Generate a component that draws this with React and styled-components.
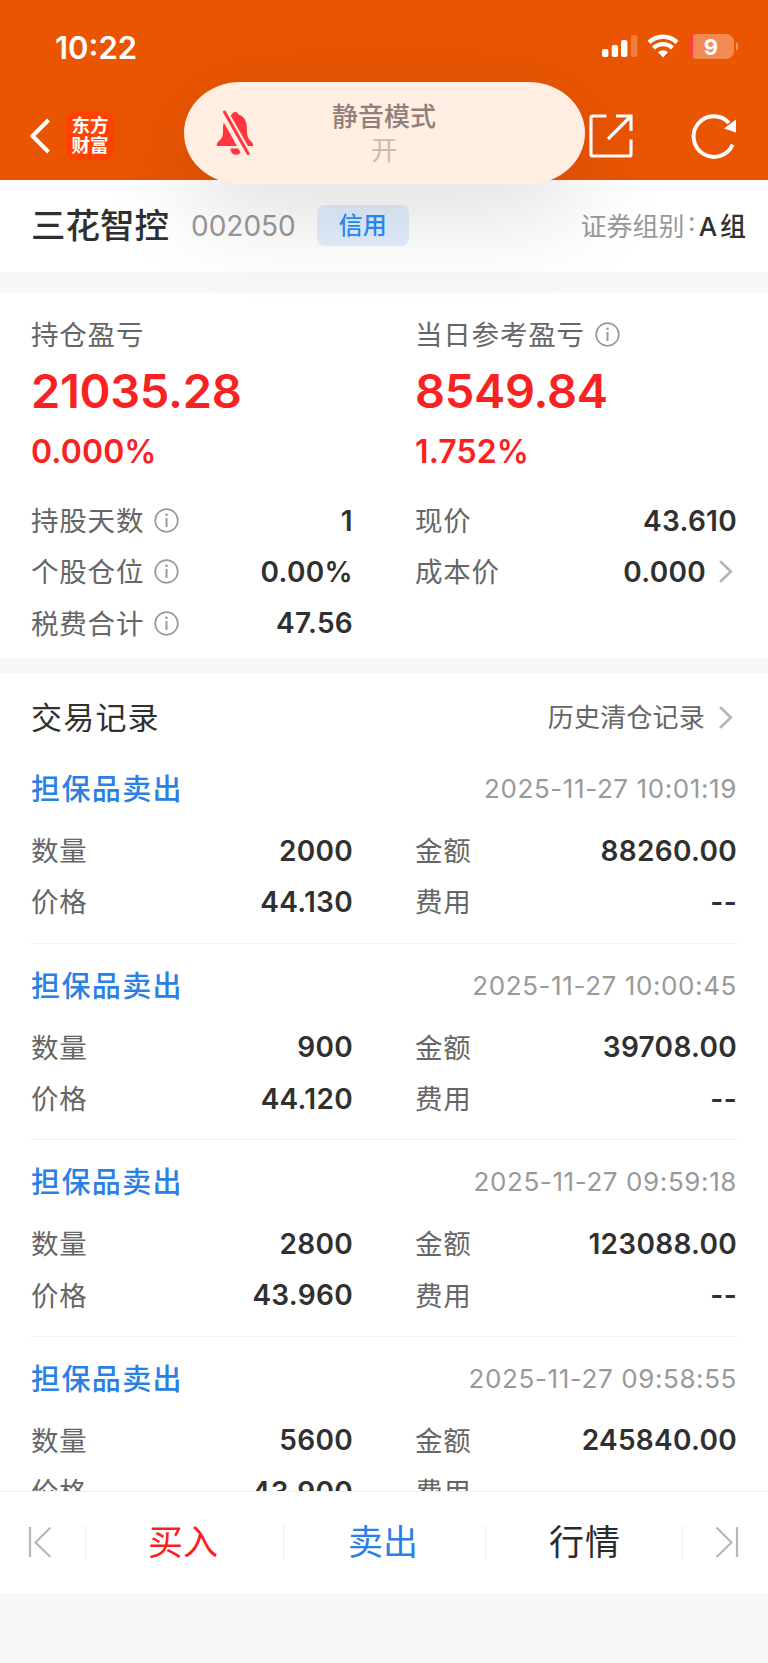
import React from "react";
import styled, { createGlobalStyle } from "styled-components";

const GlobalStyle = createGlobalStyle`
  * {
    box-sizing: border-box;
  }
  body {
    margin: 0;
    background: #f6f8fa;
    font-family: Inter, "Noto Sans CJK SC", sans-serif;
    color: #303030;
  }
`;

const summaryRows = [
  { label: "持股天数", value: "1", info: true },
  { label: "现价", value: "43.610" },
  { label: "个股仓位", value: "0.00%", info: true },
  { label: "成本价", value: "0.000", arrow: true },
  { label: "税费合计", value: "47.56", info: true },
];

const records = [
  {
    time: "2025-11-27 10:01:19",
    count: "2000",
    amount: "88260.00",
    price: "44.130",
  },
  {
    time: "2025-11-27 10:00:45",
    count: "900",
    amount: "39708.00",
    price: "44.120",
  },
  {
    time: "2025-11-27 09:59:18",
    count: "2800",
    amount: "123088.00",
    price: "43.960",
  },
  {
    time: "2025-11-27 09:58:55",
    count: "5600",
    amount: "245840.00",
    price: "43.900",
  },
];

function InfoIcon() {
  return (
    <svg width="25" height="25" viewBox="0 0 25 25" fill="none">
      <circle cx="12.5" cy="12.5" r="11.3" stroke="#999" strokeWidth="1.7" />
      <path d="M12.5 10v9" stroke="#999" strokeWidth="2" />
      <circle cx="12.5" cy="6.8" r="1.3" fill="#999" />
    </svg>
  );
}

function ChevronIcon() {
  return (
    <svg width="14" height="23" viewBox="0 0 14 23" fill="none">
      <path
        d="M1.8 1.8l10 9.7-10 9.7"
        stroke="#b5b5b5"
        strokeWidth="2.6"
        strokeLinecap="round"
      />
    </svg>
  );
}

function Field({ label, value, info, arrow }) {
  return (
    <FieldRow $arrow={arrow}>
      <Label>{label}</Label>
      {info && <InfoIcon />}
      <Value $arrow={arrow}>{value}</Value>
      {arrow && <ChevronIcon />}
    </FieldRow>
  );
}

export default function App() {
  return (
    <>
      <GlobalStyle />
      <Screen>
        <Header>
          <StatusBar>
            <Clock>10:22</Clock>
            <svg width="138" height="26" viewBox="0 0 138 26" fill="#fff">
              <rect x="0" y="15" width="6.4" height="8" rx="2" />
              <rect x="9.7" y="11" width="6.4" height="12" rx="2" />
              <rect x="19" y="6" width="6.4" height="17" rx="2" />
              <rect x="29" y="1" width="6.4" height="22" rx="2" opacity=".25" />
              <g fill="none" stroke="#fff" strokeWidth="4.4">
                <path d="M47 8.3a20.5 20.5 0 0 1 28 0" />
                <path d="M51.500 14a13.500 13.500 0 0 1 19 0" />
              </g>
              <path d="M61 23.500l-5-5.200a7.200 7.200 0 0 1 10 0z" />
              <rect x="87" y="0" width="45" height="25" rx="8" opacity=".32" />
              <path
                d="M91 .9v23.2c-2.600-1-4-3.500-4-6.600v-10c0-3.100 1.400-5.600 4-6.600z"
                fill="#ff3b45"
              />
              <path d="M134 8.500c3 .8 3 7.200 0 8z" opacity=".4" />
              <BatteryText x="109" y="20.5">
                9
              </BatteryText>
            </svg>
          </StatusBar>
          <NavBar>
            <svg width="21" height="36" viewBox="0 0 21 36" fill="none">
              <path
                d="M18.500 2L2.500 18l16 16"
                stroke="#fff"
                strokeWidth="4"
                strokeLinejoin="round"
              />
            </svg>
            <Logo>
              <span>东方</span>
              <span>财富</span>
            </Logo>
            <NavActions>
              <svg width="44" height="44" viewBox="0 0 44 44" fill="none">
                <path
                  d="M17.500 2H3.500Q2 2 2 3.500v37Q2 42 3.500 42h37q1.500 0 1.500-1.500V25.500M27 2h15v15M42 2L19 25"
                  stroke="#fff"
                  strokeWidth="3.200"
                />
              </svg>
              <svg width="46" height="46" viewBox="0 0 46 46" fill="none">
                <path
                  d="M41.600 31.500A20.300 20.300 0 1 1 38 10"
                  stroke="#fff"
                  strokeWidth="3.900"
                />
                <path d="M45 6.500v13L33 15.500z" fill="#fff" />
              </svg>
            </NavActions>
          </NavBar>
        </Header>

        <MutePill>
          <svg width="38" height="46" viewBox="0 0 38 46">
            <g fill="#ff3640">
              <path d="M7.800 12.500L21 36H1c-.8-2.500.2-3.500 2-5 3-2.500 4-5 4-9 0-4 0-7 .8-9.500z" />
              <path d="M14.500 5.200l1.500-.7C16.800 1.300 21.700 1.300 22.500 4.500c5.500 1.800 8 6.300 8.300 12 .3 7.200 0 11 4.200 15 1.800 1.500 2.300 2.500 2 4.500h-5z" />
              <path d="M14.500 38.500h7.800l2.200 4c-2.500 4-10 3-10-4z" />
            </g>
            <path
              d="M8.500 2L32 43.500"
              stroke="#ff3640"
              strokeWidth="3"
              strokeLinecap="round"
            />
          </svg>
          <PillText>
            <PillTitle>静音模式</PillTitle>
            <PillState>开</PillState>
          </PillText>
        </MutePill>

        <StockBar>
          <StockName>三花智控</StockName>
          <StockCode>002050</StockCode>
          <CreditTag>信用</CreditTag>
          <Group>
            证券组别<i>:</i>
            <b>A 组</b>
          </Group>
        </StockBar>

        <Summary>
          <Columns>
            <Profit>
              <ProfitLabel>
                <Label>持仓盈亏</Label>
              </ProfitLabel>
              <ProfitValue>21035.28</ProfitValue>
              <ProfitRate>0.000%</ProfitRate>
            </Profit>
            <Profit>
              <ProfitLabel>
                <Label>当日参考盈亏</Label>
                <InfoIcon />
              </ProfitLabel>
              <ProfitValue>8549.84</ProfitValue>
              <ProfitRate>1.752%</ProfitRate>
            </Profit>
          </Columns>
          <Columns>
            {summaryRows.map((row) => (
              <Field key={row.label} {...row} />
            ))}
          </Columns>
        </Summary>

        <Records>
          <RecordsHeader>
            <RecordsTitle>交易记录</RecordsTitle>
            <HistoryLink>
              <span>历史清仓记录</span>
              <ChevronIcon />
            </HistoryLink>
          </RecordsHeader>
          {records.map((record) => (
            <Record key={record.time}>
              <RecordHead>
                <RecordType>担保品卖出</RecordType>
                <RecordTime>{record.time}</RecordTime>
              </RecordHead>
              <Columns>
                <Field label="数量" value={record.count} />
                <Field label="金额" value={record.amount} />
                <Field label="价格" value={record.price} />
                <Field label="费用" value="--" />
              </Columns>
            </Record>
          ))}
        </Records>

        <TabBar>
          <EdgeButton>
            <svg width="24" height="32" viewBox="0 0 24 32" fill="none">
              <path
                d="M2 1v30M22.500 1.500L7.500 16.500l15 14.500"
                stroke="#b8b8b8"
                strokeWidth="2.200"
              />
            </svg>
          </EdgeButton>
          <TabButton $color="#fb1f1f">买入</TabButton>
          <TabButton $color="#2b80e6">卖出</TabButton>
          <TabButton $color="#2b2b2b">行情</TabButton>
          <EdgeButton $last>
            <svg width="24" height="32" viewBox="0 0 24 32" fill="none">
              <path
                d="M22 1v30M1.500 1.500L16.500 16.500l-15 14.500"
                stroke="#b8b8b8"
                strokeWidth="2.200"
              />
            </svg>
          </EdgeButton>
        </TabBar>
      </Screen>
    </>
  );
}

const Screen = styled.div`
  position: relative;
  display: flex;
  flex-direction: column;
  width: 768px;
  height: 1663px;
  padding-bottom: 70px;
  overflow: hidden;
  background: #f6f8fa;
`;

const Header = styled.header`
  flex: none;
  height: 180px;
  background: #ea5502;
`;

const StatusBar = styled.div`
  display: flex;
  align-items: center;
  justify-content: space-between;
  height: 92px;
  padding: 2px 28px 0 55px;
`;

const Clock = styled.span`
  padding-top: 1px;
  font-size: 31px;
  font-weight: 600;
  color: #fff;
`;

const BatteryText = styled.text`
  font-size: 22px;
  font-weight: 700;
  text-anchor: middle;
`;

const NavBar = styled.nav`
  display: flex;
  align-items: center;
  height: 87px;
  padding: 0 31px 0 30px;
`;

const Logo = styled.div`
  display: flex;
  flex-direction: column;
  justify-content: center;
  width: 48px;
  height: 48px;
  margin-left: 15px;
  padding-bottom: 2px;
  border-radius: 9px;
  background: #ff4200;
  font-size: 18.500px;
  font-weight: 700;
  line-height: 20px;
  text-align: center;
  color: #fff;
`;

const NavActions = styled.div`
  display: flex;
  align-items: center;
  gap: 58px;
  margin-left: auto;
`;

const MutePill = styled.div`
  position: absolute;
  top: 82px;
  left: 184px;
  display: flex;
  align-items: center;
  width: 401px;
  height: 102px;
  padding-left: 32px;
  border-radius: 56px / 51px;
  background: #ffeee1;
  box-shadow: 0 26px 100px rgba(0, 0, 0, 0.14);
`;

const PillText = styled.div`
  display: flex;
  flex-direction: column;
  align-items: center;
  flex: 1;
  padding: 2px 71px 0 0;
  font-size: 26px;
  line-height: 34px;
`;

const PillTitle = styled.span`
  font-weight: 500;
  color: #8f807b;
`;

const PillState = styled.span`
  color: #ccb9b1;
`;

const StockBar = styled.section`
  display: flex;
  flex: none;
  align-items: center;
  height: 92px;
  padding: 0 22px 2px 31px;
  background: #fff;
`;

const StockName = styled.h1`
  margin: 0;
  padding-bottom: 4px;
  font-size: 34.500px;
  font-weight: 500;
`;

const StockCode = styled.span`
  margin-left: 22px;
  padding-top: 2px;
  font-size: 28px;
  color: #999;
`;

const CreditTag = styled.span`
  width: 92px;
  height: 41px;
  margin-left: 21px;
  border-radius: 8px;
  background: #e3effd;
  font-size: 24px;
  font-weight: 500;
  line-height: 41px;
  text-align: center;
  color: #2c8cf8;
`;

const Group = styled.span`
  display: flex;
  margin-left: auto;
  padding-bottom: 2px;
  font-size: 26px;
  color: #999;
  i {
    width: 14px;
    font-style: normal;
    text-align: center;
  }
  b {
    font-weight: 500;
    word-spacing: -4px;
    color: #303030;
  }
`;

const Summary = styled.section`
  flex: none;
  height: 365px;
  margin-top: 21px;
  padding: 17px 31px 0;
  background: #fff;
`;

const Columns = styled.div`
  display: grid;
  grid-template-columns: 322px 322px;
  column-gap: 62px;
`;

const Profit = styled.div`
  display: flex;
  flex-direction: column;
  height: 185px;
`;

const ProfitLabel = styled.div`
  display: flex;
  align-items: center;
  height: 48px;
`;

const ProfitValue = styled.strong`
  font-size: 47px;
  font-weight: 600;
  line-height: 66px;
  letter-spacing: -0.300px;
  color: #f92222;
`;

const ProfitRate = styled.span`
  font-size: 32px;
  font-weight: 600;
  line-height: 55px;
  letter-spacing: 0.100px;
  color: #f92222;
`;

const FieldRow = styled.div`
  display: flex;
  align-items: center;
  height: 51.300px;
  padding-right: ${(props) => (props.$arrow ? "4px" : "0")};
`;

const Label = styled.span`
  margin-right: 10px;
  padding-bottom: 3px;
  font-size: 27.500px;
  letter-spacing: 0.800px;
  color: #666;
`;

const Value = styled.span`
  margin-left: auto;
  margin-right: ${(props) => (props.$arrow ? "13px" : "0")};
  font-size: 28px;
  font-weight: 600;
  letter-spacing: 0.300px;
`;

const Records = styled.section`
  flex: 1;
  min-height: 0;
  margin-top: 15px;
  padding: 0 31px;
  overflow: hidden;
  background: #fff;
`;

const RecordsHeader = styled.div`
  display: flex;
  align-items: center;
  justify-content: space-between;
  height: 74px;
  padding-top: 14px;
`;

const RecordsTitle = styled.h2`
  margin: 0;
  padding-bottom: 4px;
  font-size: 31px;
  font-weight: 400;
  letter-spacing: 1.200px;
`;

const HistoryLink = styled.a`
  display: flex;
  align-items: center;
  gap: 14px;
  padding-right: 4px;
  font-size: 26px;
  letter-spacing: 0.200px;
  color: #666;
  span {
    padding-bottom: 3px;
  }
`;

const Record = styled.article`
  height: 196.600px;
  padding-top: 12px;
  border-bottom: 1px solid #f1f1f1;
`;

const RecordHead = styled.div`
  display: flex;
  align-items: center;
  justify-content: space-between;
  height: 66px;
  padding-bottom: 7px;
`;

const RecordType = styled.span`
  padding-bottom: 3px;
  font-size: 29px;
  font-weight: 500;
  letter-spacing: 1.400px;
  color: #2b80e6;
`;

const RecordTime = styled.time`
  font-size: 26px;
  letter-spacing: 0.600px;
  color: #999;
`;

const TabBar = styled.footer`
  display: grid;
  flex: none;
  grid-template-columns: 85px 198px 202px 198px 85px;
  align-items: center;
  height: 102px;
  border-top: 1px solid #f1f1f1;
  background: #fff;
`;

const EdgeButton = styled.div`
  display: flex;
  justify-content: ${(props) => (props.$last ? "flex-end" : "flex-start")};
  padding: 0 29px 1px 28px;
`;

const TabButton = styled.div`
  height: 35px;
  padding-right: 3px;
  border-left: 1px solid #eee;
  font-size: 35px;
  line-height: 35px;
  text-align: center;
  color: ${(props) => props.$color};
  &:nth-child(4) {
    padding: 0 0 0 2px;
    border-right: 1px solid #eee;
    letter-spacing: 1px;
  }
`;
